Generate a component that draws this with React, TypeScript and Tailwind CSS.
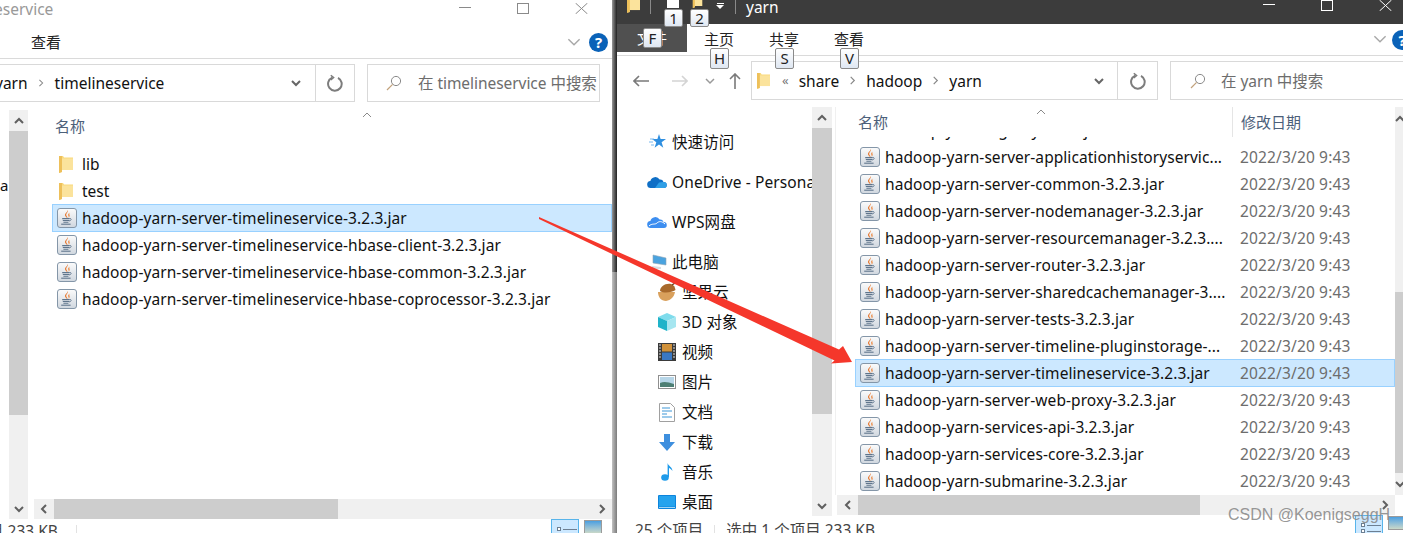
import React from "react";

const font = { fontFamily: '"Noto Sans","Noto Sans CJK SC",sans-serif' };

function Jar() {
  return (
    <svg width="20" height="20" viewBox="0 0 20 20" className="shrink-0">
      <defs>
        <linearGradient id="jarbg" x1="0" y1="0" x2="0" y2="1">
          <stop offset="0" stopColor="#fbfbfb" />
          <stop offset="1" stopColor="#d0d7df" />
        </linearGradient>
      </defs>
      <rect x="0.5" y="0.5" width="19" height="19" rx="2.5" fill="url(#jarbg)" stroke="#8496a8" />
      <path d="M10.8 2c1 2.2-2.6 3.2-1.3 6 .4.8 1 1.3 1 2.2-1.2-.7-2.9-2.2-2.4-3.9.5-1.7 2.7-2.4 2.7-4.3z" fill="#e66f22" />
      <path d="M12.8 4.6c-1 .9-2.2 1.6-1.6 2.9.2.6.7 1 .3 1.9 1-.6 1.6-1.5 1.1-2.5-.3-.9-.3-1.5.2-2.3z" fill="#ec9150" />
      <path d="M5.2 10.6h7.4M5.8 12.5h6.4M6.4 14.2h5" stroke="#5f758c" strokeWidth="1.1" fill="none" />
      <path d="M12.5 10.4c2.2-.3 2.4 2.2-.6 2.6" stroke="#5f758c" strokeWidth=".9" fill="none" />
      <path d="M4.2 16.2h9.4" stroke="#5f758c" strokeWidth="1.1" />
    </svg>
  );
}

function Folder({ w = 14, h = 18, className = "" }: { w?: number; h?: number; className?: string }) {
  return (
    <svg width={w} height={h} viewBox="0 0 14 18" className={"shrink-0 " + className}>
      <path d="M0 1h4l1 1.5h9V15H3v2l-3 1z" fill="#f9d97c" />
      <path d="M3 3.5h11V15H3z" fill="#fbe39c" />
      <path d="M0 1h3v16l-3 1z" fill="#eec05a" />
    </svg>
  );
}

function HelpIcon({ className = "" }: { className?: string }) {
  return (
    <div className={"flex items-center justify-center rounded-full bg-[#0a62b8] text-white font-bold text-[15px] leading-none shrink-0 " + className}>?</div>
  );
}

function Chevron({ dir, color = "#606060", size = 10, sw = 2 }: { dir: "up" | "down" | "left" | "right"; color?: string; size?: number; sw?: number }) {
  const d = { up: "M1 7l4-4 4 4", down: "M1 3l4 4 4-4", left: "M7 1L3 5l4 4", right: "M3 1l4 4-4 4" }[dir];
  return (
    <svg width={size} height={size} viewBox="0 0 10 10" className="shrink-0">
      <path d={d} fill="none" stroke={color} strokeWidth={sw} />
    </svg>
  );
}

function Refresh() {
  return (
    <svg width="16" height="18" viewBox="0 0 16 18">
      <path d="M5.2 3.6A6.8 6.8 0 1 0 11 3.8" fill="none" stroke="#7d7d7d" strokeWidth="2" />
      <path d="M3.8 1.2l2.8 2.4-2.8 2.4" fill="none" stroke="#7d7d7d" strokeWidth="1.5" />
    </svg>
  );
}

function Magnifier() {
  return (
    <svg width="16" height="16" viewBox="0 0 16 16" className="shrink-0">
      <circle cx="10" cy="6" r="4.6" fill="none" stroke="#8a8a8a" strokeWidth="1" />
      <path d="M6.6 9.4L1 15" stroke="#c2a27c" strokeWidth="1.2" />
    </svg>
  );
}

function WinButtons({ color, gaps, className = "" }: { color: string; gaps: string; className?: string }) {
  return (
    <div className={"flex items-start " + gaps + " " + className}>
      <div className="w-[12px] h-px mt-[4px]" style={{ backgroundColor: color }} />
      <div className="w-[12px] h-[11px] border" style={{ borderColor: color }} />
      <svg width="13" height="11" viewBox="0 0 13 11">
        <path d="M0.5 0L12.5 11M12.5 0L0.5 11" stroke={color} strokeWidth="1" />
      </svg>
    </div>
  );
}

function VScroll({ thumbH, className = "" }: { thumbH: string; className?: string }) {
  return (
    <div className={"flex flex-col bg-[#f0f0f0] " + className}>
      <div className="h-[21px] flex items-center justify-center shrink-0"><Chevron dir="up" /></div>
      <div className={"bg-[#cdcdcd] shrink-0 " + thumbH} />
      <div className="flex-1" />
      <div className="h-[21px] flex items-center justify-center shrink-0"><Chevron dir="down" /></div>
    </div>
  );
}

function HScroll({ thumb, spacer, className = "" }: { thumb: string; spacer: string; className?: string }) {
  return (
    <div className={"h-[20px] flex items-center bg-[#f0f0f0] " + className}>
      <div className={"flex items-center justify-center shrink-0 " + spacer}><Chevron dir="left" /></div>
      <div className={"h-full bg-[#cdcdcd] shrink-0 " + thumb} />
      <div className="flex-1" />
      <div className="w-[20px] flex items-center justify-center shrink-0"><Chevron dir="right" /></div>
    </div>
  );
}

function ViewButtons({ className = "" }: { className?: string }) {
  return (
    <div className={"flex items-start gap-[5px] " + className}>
      <div className="w-[28px] h-[20px] bg-[#cce8ff] border border-[#58b4ea] flex flex-col gap-[2px] pl-[5px] pt-[7px]">
        <div className="flex items-center gap-[2px]"><div className="w-[4px] h-[4px] border border-[#6d7f92] bg-white" /><div className="w-[14px] h-px bg-[#6d7f92]" /></div>
        <div className="flex items-center gap-[2px]"><div className="w-[4px] h-[4px] border border-[#6d7f92] bg-white" /><div className="w-[14px] h-px bg-[#6d7f92]" /></div>
      </div>
      <div className="w-[18px] h-[14px] mt-[1px] border border-[#9a9a9a] bg-gradient-to-b from-[#4a9fe0] to-[#c9d8c8]" />
    </div>
  );
}

function FileRow({ name, selected, date }: { name: string; selected?: boolean; date?: string }) {
  return (
    <div className={"h-[28px] -mb-px flex items-center shrink-0 border " + (selected ? "bg-[#cce8ff] border-[#99d1ff]" : "border-transparent")}>
      <div className="ml-[4px] mr-[5px] flex shrink-0"><Jar /></div>
      <span className={"pt-[2px] text-[15.5px] whitespace-nowrap text-[#111] tracking-[0.06px] " + (date ? "w-[355px] overflow-hidden" : "")}>{name}</span>
      {date && <span className="pt-[2px] text-[15.5px] whitespace-nowrap text-[#6d6d6d] tracking-[0.15px]">{date}</span>}
    </div>
  );
}

function FolderRow({ name }: { name: string }) {
  return (
    <div className="h-[28px] -mb-px flex items-center shrink-0 border border-transparent">
      <div className="ml-[6px] mr-[9px] flex"><Folder /></div>
      <span className="pt-[2px] text-[15.5px] text-[#111]">{name}</span>
    </div>
  );
}

function NavStar() {
  return (
    <svg width="20" height="18" viewBox="0 0 20 18">
      <path d="M12 1l1.6 5H19l-4.4 3.2 1.7 5.6L12 11.4 7.6 14.8l1.7-5.6L5 6h5.4z" fill="#2f8fe0" />
      <path d="M3 6h4M2 9h4M4 12h3" stroke="#79b8ee" strokeWidth="1" />
    </svg>
  );
}
function NavOneDrive() {
  return (
    <svg width="20" height="14" viewBox="0 0 20 14">
      <path d="M4 13a3.5 3.5 0 0 1-.6-7A5 5 0 0 1 12.6 4.6 3.6 3.6 0 0 1 16.5 7a3 3 0 0 1 .5 6z" fill="#0f6fc6" />
      <path d="M8 13l4-5.5 4.5-.5A3 3 0 0 1 17 13z" fill="#2f9fe6" />
    </svg>
  );
}
function NavWps() {
  return (
    <svg width="20" height="14" viewBox="0 0 20 14">
      <path d="M4 13a3.5 3.5 0 0 1-.6-7A5 5 0 0 1 12.6 4.6 3.6 3.6 0 0 1 16.5 7a3 3 0 0 1 .5 6z" fill="#3d8ef0" />
      <path d="M2 11c3-3 6-1 8-3s5-2 8 1" stroke="#ffffff" strokeWidth="1" fill="none" />
    </svg>
  );
}
function NavPc() {
  return (
    <svg width="16" height="16" viewBox="0 0 16 16">
      <path d="M2 1l13 3v7L2 9z" fill="#4aa3df" stroke="#8fa5b5" strokeWidth=".6" />
      <path d="M1 12l9 1v2H1z" fill="#d8dde2" />
    </svg>
  );
}
function NavAcorn() {
  return (
    <svg width="20" height="20" viewBox="0 0 20 20">
      <path d="M1 10c0 5 3 9 8 9 5-1 8-4 9-9z" fill="#d9a05c" />
      <path d="M3 9c0-4 5-8 11-7 3 1 4 3 4.500 6-3 2-11 4-15.500 1z" fill="#a8692c" />
      <path d="M15 3l3-2" stroke="#6b4420" strokeWidth="1.500" />
    </svg>
  );
}
function NavCube() {
  return (
    <svg width="20" height="20" viewBox="0 0 20 20">
      <path d="M10 1l9 4-9 4-9-4z" fill="#7fdcec" />
      <path d="M1 5l9 4v10l-9-4z" fill="#1fb3c9" />
      <path d="M19 5l-9 4v10l9-4z" fill="#a6e6f0" />
    </svg>
  );
}
function NavFilm() {
  return (
    <svg width="18" height="18" viewBox="0 0 18 18">
      <rect width="18" height="18" fill="#3a3a3a" />
      <rect x="4" y="1" width="10" height="7.500" fill="#d0913a" />
      <rect x="4" y="9.500" width="10" height="7.500" fill="#3a78c4" />
      <path d="M1 2h2M1 5h2M1 8h2M1 11h2M1 14h2M15 2h2M15 5h2M15 8h2M15 11h2M15 14h2" stroke="#ddd" strokeWidth="1.200" />
    </svg>
  );
}
function NavPicture() {
  return (
    <svg width="18" height="14" viewBox="0 0 18 14">
      <rect x=".5" y=".5" width="17" height="13" fill="#fff" stroke="#8f8f8f" />
      <rect x="2" y="2" width="14" height="10" fill="#b7d6e8" />
      <path d="M2 8c4-2 8-1 14 1v3H2z" fill="#4d7f74" />
    </svg>
  );
}
function NavDoc() {
  return (
    <svg width="16" height="19" viewBox="0 0 16 19">
      <path d="M.5.5h11l4 4v14H.5z" fill="#fff" stroke="#a0a0a0" />
      <path d="M3 5h8M3 8h10M3 11h5M3 14h10" stroke="#3f97d8" strokeWidth="1.200" />
    </svg>
  );
}
function NavDown() {
  return (
    <svg width="16" height="17" viewBox="0 0 16 17">
      <path d="M5 0h6v8h5l-8 9-8-9h5z" fill="#3e8fde" />
    </svg>
  );
}
function NavMusic() {
  return (
    <svg width="12" height="18" viewBox="0 0 12 18">
      <ellipse cx="4" cy="14.500" rx="3.800" ry="3.300" fill="#1f9bea" />
      <path d="M6.600 14V0c.6 3 5 4 4.800 8-1-2-2.800-2.600-3.400-3v9z" fill="#1f9bea" />
    </svg>
  );
}
function NavDesktop() {
  return (
    <svg width="18" height="14" viewBox="0 0 18 14">
      <rect width="18" height="14" rx="1" fill="#0d84dc" />
      <rect x="1" y="1" width="16" height="10.500" fill="#25a3ee" />
      <path d="M1 12.500h16" stroke="#9fd4f5" strokeWidth="1" />
    </svg>
  );
}

function NavRow({ icon, label, mb }: { icon: React.ReactNode; label: string; mb?: string }) {
  return (
    <div className={"flex items-center whitespace-nowrap overflow-hidden shrink-0 h-[30px] " + (mb || "")}>
      <div className="flex items-center justify-center shrink-0 w-[25px] pr-[5px]">{icon}</div>
      <span className="pt-[2px] text-[15.500px] text-[#111] tracking-[0.1px]">{label}</span>
    </div>
  );
}

function KeyTip({ label, className }: { label: string; className: string }) {
  return (
    <div className={"absolute flex items-center justify-center rounded-[2px] border border-[#8a8a8a] bg-gradient-to-b from-white to-[#dfe7f2] text-[15px] text-[#222] " + className}>{label}</div>
  );
}

const rightFiles = [
  "hadoop-yarn-server-applicationhistoryservic...",
  "hadoop-yarn-server-common-3.2.3.jar",
  "hadoop-yarn-server-nodemanager-3.2.3.jar",
  "hadoop-yarn-server-resourcemanager-3.2.3....",
  "hadoop-yarn-server-router-3.2.3.jar",
  "hadoop-yarn-server-sharedcachemanager-3....",
  "hadoop-yarn-server-tests-3.2.3.jar",
  "hadoop-yarn-server-timeline-pluginstorage-...",
  "hadoop-yarn-server-timelineservice-3.2.3.jar",
  "hadoop-yarn-server-web-proxy-3.2.3.jar",
  "hadoop-yarn-services-api-3.2.3.jar",
  "hadoop-yarn-services-core-3.2.3.jar",
  "hadoop-yarn-submarine-3.2.3.jar",
];

function LeftWindow() {
  return (
    <div className="w-[612px] h-full shrink-0 flex flex-col bg-white overflow-hidden">
      <div className="h-[24px] shrink-0 flex items-start justify-between">
        <span className="text-[15.500px] leading-[18px] text-[#999] -ml-[6px]">eservice</span>
        <WinButtons color="#8a8a8a" gaps="gap-[46px]" className="mt-[3px] mr-[24px]" />
      </div>
      <div className="h-[35px] shrink-0 border-b border-[#dadada] flex items-center pl-[31px] pt-[2px]">
        <span className="text-[15px] text-[#222]">查看</span>
        <div className="flex-1" />
        <Chevron dir="down" color="#a8a8a8" size={14} sw={1} />
        <HelpIcon className="w-[19px] h-[19px] ml-[8px] mr-[4px]" />
      </div>
      <div className="h-[49px] shrink-0 flex items-start pt-[5px]">
        <div className="w-[355px] h-[38px] border border-l-0 border-[#d9d9d9] flex items-center shrink-0">
          <span className="pt-[2px] text-[15.500px] text-[#111] -ml-[5px]">yarn</span>
          <div className="ml-[9px] mr-[10px]"><Chevron dir="right" color="#888" size={8} sw={1.3} /></div>
          <span className="pt-[2px] text-[15.500px] text-[#111]">timelineservice</span>
          <div className="flex-1" />
          <Chevron dir="down" color="#666" />
          <div className="w-px h-full bg-[#d9d9d9] ml-[14px]" />
          <div className="w-[38px] flex justify-center"><Refresh /></div>
        </div>
        <div className="w-[233px] h-[38px] ml-[12px] border border-[#d9d9d9] flex items-center pl-[18px] whitespace-nowrap overflow-hidden">
          <Magnifier />
          <span className="pt-[2px] ml-[16px] text-[15.500px] text-[#6d6d6d] tracking-[-0.05px]">在 timelineservice 中搜索</span>
        </div>
      </div>
      <div className="h-[391px] shrink-0 flex relative">
        <VScroll thumbH="h-[284px]" className="w-[19px] ml-[9px] mt-[2px] shrink-0 h-[409px]" />
        <div className="flex-1 ml-[24px] flex flex-col">
          <div className="h-[42px] shrink-0 flex items-start pl-[3px] pt-[7px]">
            <span className="text-[15px] text-[#4c607a]">名称</span>
          </div>
          <div className="flex flex-col">
            <FolderRow name="lib" />
            <FolderRow name="test" />
            <FileRow name="hadoop-yarn-server-timelineservice-3.2.3.jar" selected />
            <FileRow name="hadoop-yarn-server-timelineservice-hbase-client-3.2.3.jar" />
            <FileRow name="hadoop-yarn-server-timelineservice-hbase-common-3.2.3.jar" />
            <FileRow name="hadoop-yarn-server-timelineservice-hbase-coprocessor-3.2.3.jar" />
          </div>
        </div>
        <div className="absolute left-[362px] top-[2px]"><Chevron dir="up" color="#8a8a8a" size={10} sw={1} /></div>
        <span className="absolute left-0 top-[66px] text-[15px] text-[#111]">a</span>
      </div>
      <HScroll thumb="w-[284px]" spacer="w-[20px]" className="ml-[34px] shrink-0" />
      <div className="flex-1 relative overflow-hidden">
        <div className="absolute left-0 top-[3px] flex items-center h-[20px] -ml-[12px]">
          <span className="text-[15.500px] text-[#444] whitespace-nowrap">目 233 KB</span>
        </div>
        <div className="absolute left-[76px] top-[6px] w-px h-[10px] bg-[#e2e2e2]" />
        <ViewButtons className="absolute left-[551px] top-0" />
      </div>
    </div>
  );
}

function RightWindow() {
  return (
    <div className="flex-1 h-full flex flex-col bg-white overflow-hidden">
      <div className="h-[24px] shrink-0 bg-[#3c3c3c] flex items-start">
        <div className="ml-[10px] -mt-[4px]"><Folder w={13} h={17} /></div>
        <div className="w-px h-[14px] bg-[#8a8a8a] ml-[10px]" />
        <div className="w-[12px] h-[8px] bg-white ml-[16px]" />
        <div className="ml-[12px] -mt-[4px]"><Folder w={13} h={12} /></div>
        <div className="ml-[12px] mt-[3px] flex flex-col items-center gap-[1px]">
          <div className="w-[7px] h-px bg-white" />
          <div className="w-0 h-0 border-l-[4px] border-r-[4px] border-t-[4px] border-l-transparent border-r-transparent border-t-white" />
        </div>
        <div className="w-px h-[14px] bg-[#8a8a8a] ml-[11px]" />
        <span className="ml-[10px] text-[15.500px] leading-[14px] text-white">yarn</span>
        <div className="flex-1" />
        <WinButtons color="#ffffff" gaps="gap-[46px]" className="mr-[11px]" />
      </div>
      <div className="h-[32px] shrink-0 border-b border-[#dadada] flex items-start">
        <div className="w-[70px] h-[28px] bg-[#505050] shrink-0 flex items-center justify-center">
          <span className="text-[15px] text-white">文件</span>
        </div>
        <div className="flex gap-[35px] ml-[17px] mt-[4px]">
          <span className="text-[15px] text-[#222]">主页</span>
          <span className="text-[15px] text-[#222]">共享</span>
          <span className="text-[15px] text-[#222]">查看</span>
        </div>
        <div className="flex-1" />
        <div className="mt-[8px] mr-[5px]"><Chevron dir="down" color="#a8a8a8" size={14} sw={1} /></div>
        <HelpIcon className="w-[20px] h-[20px] mt-[6px] -mr-[9px]" />
      </div>
      <div className="h-[51px] shrink-0 flex items-start pt-[5px]">
        <div className="w-[134px] h-[39px] shrink-0 flex items-center">
          <svg width="16" height="12" viewBox="0 0 16 12" className="ml-[16px] shrink-0"><path d="M6 1L1 6l5 5M1 6h15" fill="none" stroke="#7a7a7a" strokeWidth="1.6" /></svg>
          <svg width="16" height="12" viewBox="0 0 16 12" className="ml-[23px] shrink-0"><path d="M10 1l5 5-5 5M15 6H0" fill="none" stroke="#d4d4d4" strokeWidth="1.6" /></svg>
          <div className="ml-[17px]"><Chevron dir="down" color="#9a9a9a" size={10} sw={1.5} /></div>
          <svg width="12" height="16" viewBox="0 0 12 16" className="ml-[14px] shrink-0"><path d="M1 6l5-5 5 5M6 1v15" fill="none" stroke="#7a7a7a" strokeWidth="1.6" /></svg>
        </div>
        <div className="w-[407px] h-[39px] shrink-0 border border-[#d9d9d9] flex items-center pl-[5px] whitespace-nowrap">
          <Folder w={13} h={17} />
          <span className="ml-[12px] mr-[10px] text-[13px] leading-none text-[#777]">«</span>
          <span className="pt-[2px] text-[15.500px] text-[#111]">share</span>
          <div className="mx-[9px]"><Chevron dir="right" color="#888" size={9} sw={1.3} /></div>
          <span className="pt-[2px] text-[15.500px] text-[#111]">hadoop</span>
          <div className="mx-[9px]"><Chevron dir="right" color="#888" size={9} sw={1.3} /></div>
          <span className="pt-[2px] text-[15.500px] text-[#111]">yarn</span>
          <div className="flex-1" />
          <Chevron dir="down" color="#666" />
          <div className="w-px h-full bg-[#d9d9d9] ml-[13px]" />
          <div className="w-[39px] flex justify-center"><Refresh /></div>
        </div>
        <div className="flex-1 h-[39px] ml-[12px] border border-r-0 border-[#d9d9d9] flex items-center pl-[19px] whitespace-nowrap">
          <Magnifier />
          <span className="pt-[2px] ml-[15px] text-[15.500px] text-[#6d6d6d] tracking-[-0.05px]">在 yarn 中搜索</span>
        </div>
      </div>
      <div className="h-[388px] shrink-0 flex items-start relative">
        <div className="w-[195px] h-[409px] shrink-0 flex flex-col pl-[30px] pt-[20px] overflow-hidden">
          <NavRow icon={<NavStar />} label="快速访问" mb="mb-[10px]" />
          <NavRow icon={<NavOneDrive />} label="OneDrive - Personal" mb="mb-[10px]" />
          <NavRow icon={<NavWps />} label="WPS网盘" mb="mb-[10px]" />
          <NavRow icon={<div className="ml-[3px]"><NavPc /></div>} label="此电脑" />
          <div className="pl-[10px] flex flex-col">
            <NavRow icon={<NavAcorn />} label="坚果云" />
            <NavRow icon={<NavCube />} label="3D 对象" />
            <NavRow icon={<NavFilm />} label="视频" />
            <NavRow icon={<NavPicture />} label="图片" />
            <NavRow icon={<NavDoc />} label="文档" />
            <NavRow icon={<NavDown />} label="下载" />
            <NavRow icon={<NavMusic />} label="音乐" />
            <NavRow icon={<NavDesktop />} label="桌面" />
          </div>
        </div>
        <VScroll thumbH="h-[286px]" className="w-[20px] shrink-0 h-[409px]" />
        <div className="flex-1 h-[388px] flex flex-col min-w-0 border-l border-[#f0f0f0] ml-[3px]">
          <div className="h-[30px] shrink-0 flex items-center relative">
            <span className="ml-[22px] text-[15px] text-[#4c607a]">名称</span>
            <div className="absolute left-[396px] top-[0px] w-px h-[30px] bg-[#e5e5e5]" />
            <span className="absolute left-[405px] top-[4px] text-[15px] text-[#4c607a]">修改日期</span>
          </div>
          <div className="h-[358px] overflow-hidden flex flex-col pl-[19px]">
            <div className="h-[6px] overflow-hidden shrink-0 relative">
              <span className="absolute left-[29px] -top-[18px] text-[15.500px] text-[#111] whitespace-nowrap tracking-[0.06px]">hadoop-yarn-registry-3.2.3.jar</span>
            </div>
            {rightFiles.map((f, i) => (
              <FileRow key={f} name={f} selected={i === 8} date="2022/3/20 9:43" />
            ))}
          </div>
        </div>
        <div className="w-[8px] h-[388px] shrink-0 bg-[#f0f0f0] flex flex-col overflow-hidden">
          <div className="h-[185px] shrink-0 pt-[7px]"><Chevron dir="up" /></div>
          <div className="h-[181px] shrink-0 bg-[#cdcdcd]" />
          <div className="flex-1 flex items-center"><Chevron dir="down" /></div>
        </div>
        <div className="absolute left-[419px] top-[0px]"><Chevron dir="up" color="#8a8a8a" size={10} sw={1} /></div>
      </div>
      <div className="h-[20px] shrink-0 flex">
        <div className="w-[220px] shrink-0" />
        <HScroll thumb="w-[342px]" spacer="w-[21px]" className="flex-1 mr-[8px]" />
      </div>
      <div className="flex-1 relative overflow-hidden">
        <div className="absolute left-[18px] top-[6px] h-[20px] flex items-center whitespace-nowrap text-[15.500px] text-[#444]">
          <span>25 个项目</span>
          <div className="w-px h-[12px] bg-[#e2e2e2] mx-[11px]" />
          <span>选中 1 个项目 233 KB</span>
        </div>
        <ViewButtons className="absolute left-[738px] top-0" />
      </div>
    </div>
  );
}

export default function App() {
  return (
    <div className="relative w-[1403px] h-[533px] overflow-hidden flex bg-white" style={font}>
      <LeftWindow />
      <div className="w-[5px] h-full shrink-0 flex flex-col">
        <div className="h-[272px] bg-gradient-to-r from-[#9a9a9a] to-[#222]" />
        <div className="flex-1 bg-gradient-to-r from-[#c2c2c2] to-[#7b7b7b]" />
      </div>
      <RightWindow />
      <KeyTip label="1" className="left-[664px] top-[9px] w-[19px] h-[18px]" />
      <KeyTip label="2" className="left-[690px] top-[9px] w-[19px] h-[18px]" />
      <KeyTip label="F" className="left-[643px] top-[28px] w-[19px] h-[20px]" />
      <KeyTip label="H" className="left-[710px] top-[48px] w-[19px] h-[21px]" />
      <KeyTip label="S" className="left-[775px] top-[48px] w-[19px] h-[21px]" />
      <KeyTip label="V" className="left-[840px] top-[48px] w-[19px] h-[21px]" />
      <svg width="1403" height="533" viewBox="0 0 1403 533" className="absolute left-0 top-0 pointer-events-none">
        <polygon points="539,217 839,349.500 843,346 852,362 831,363.500 834.500,360.500 539,219" fill="#f5372b" />
      </svg>
      <span className="absolute left-[1228px] top-[503px] text-[16px] text-[#8a8a8a]/90" style={{ fontFamily: '"Liberation Sans",sans-serif' }}>CSDN @KoenigseggH</span>
    </div>
  );
}
